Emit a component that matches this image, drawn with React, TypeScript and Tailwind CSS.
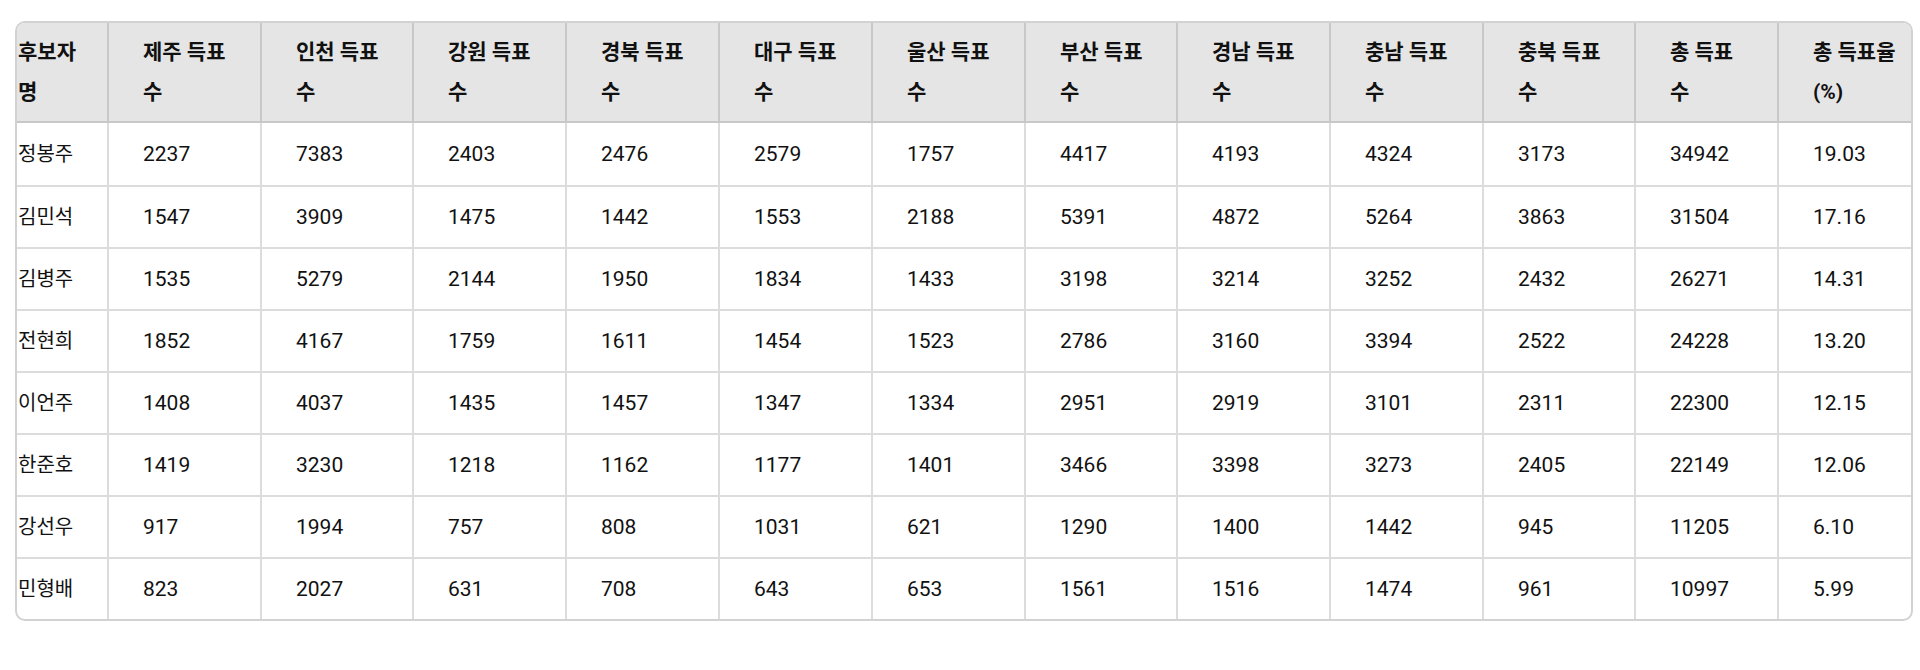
import React from 'react';

const headers: [string, string][] = [
    ['후보자', '명'],
    ['제주 득표', '수'],
    ['인천 득표', '수'],
    ['강원 득표', '수'],
    ['경북 득표', '수'],
    ['대구 득표', '수'],
    ['울산 득표', '수'],
    ['부산 득표', '수'],
    ['경남 득표', '수'],
    ['충남 득표', '수'],
    ['충북 득표', '수'],
    ['총 득표', '수'],
    ['총 득표율', '(%)'],
];

const colWidths = [90, 153, 152, 153, 153, 153, 153, 152, 153, 153, 152, 143, 134];

const rows: (string | number)[][] = [
    ['정봉주', 2237, 7383, 2403, 2476, 2579, 1757, 4417, 4193, 4324, 3173, 34942, '19.03'],
    ['김민석', 1547, 3909, 1475, 1442, 1553, 2188, 5391, 4872, 5264, 3863, 31504, '17.16'],
    ['김병주', 1535, 5279, 2144, 1950, 1834, 1433, 3198, 3214, 3252, 2432, 26271, '14.31'],
    ['전현희', 1852, 4167, 1759, 1611, 1454, 1523, 2786, 3160, 3394, 2522, 24228, '13.20'],
    ['이언주', 1408, 4037, 1435, 1457, 1347, 1334, 2951, 2919, 3101, 2311, 22300, '12.15'],
    ['한준호', 1419, 3230, 1218, 1162, 1177, 1401, 3466, 3398, 3273, 2405, 22149, '12.06'],
    ['강선우', 917, 1994, 757, 808, 1031, 621, 1290, 1400, 1442, 945, 11205, '6.10'],
    ['민형배', 823, 2027, 631, 708, 643, 653, 1561, 1516, 1474, 961, 10997, '5.99'],
];

const App = () => {
    return (
        <div className="w-[1920px] h-[670px] bg-white pl-[15px] pt-[21px] font-['Roboto','Noto_Sans_CJK_KR',sans-serif] text-[#111]">
            <div className="w-[1898px] rounded-[10px] border-2 border-[#d2d2d2] overflow-hidden">
                <table className="w-full table-fixed border-separate border-spacing-0">
                    <colgroup>
                        {colWidths.map((w, i) => (
                            <col key={i} style={{ width: w }} />
                        ))}
                    </colgroup>
                    <thead>
                        <tr className="bg-[#e5e5e5]">
                            {headers.map(([a, b], i) => (
                                <th
                                    key={i}
                                    className={`text-left align-middle font-bold text-[21px] leading-[40px] py-[9px] border-b-2 border-[#c8c8c8] ${i === 0 ? 'pl-[1px] pr-0' : 'pl-[34px] pr-0 border-l-2'}`}
                                >
                                    <span className="block whitespace-nowrap">{a}</span>
                                    <span className="block whitespace-nowrap">{b}</span>
                                </th>
                            ))}
                        </tr>
                    </thead>
                    <tbody>
                        {rows.map((r, ri) => (
                            <tr key={ri}>
                                {r.map((v, ci) => (
                                    <td
                                        key={ci}
                                        className={`align-middle leading-[40px] whitespace-nowrap border-[#dcdcdc] ${ri === 0 ? 'py-[11px]' : 'py-[10px] border-t-2'} ${ci === 0 ? 'pl-[1px] text-[20px]' : 'pl-[34px] text-[21px] border-l-2'}`}
                                    >
                                        {v}
                                    </td>
                                ))}
                            </tr>
                        ))}
                    </tbody>
                </table>
            </div>
        </div>
    );
};

export default App;
